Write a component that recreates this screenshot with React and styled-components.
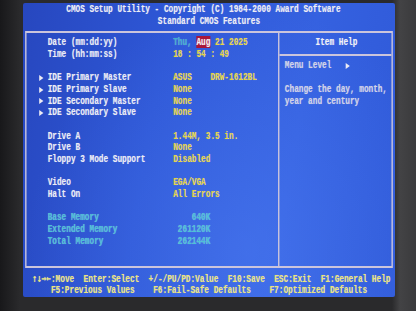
import React from 'react'
import styled, { createGlobalStyle } from 'styled-components'

// text-mode screen: 80 x 25 cells, each cell 4.65px x 11.7px on the photo
const ROW = 11.7

const GlobalStyle = createGlobalStyle`
  html, body {
    margin: 0;
    padding: 0;
    width: 416px;
    height: 311px;
    overflow: hidden;
    background: #232325;
  }
`

const Bezel = styled.div`
  width: 416px;
  height: 311px;
  overflow: hidden;
  box-sizing: border-box;
  padding: 3px 0 0 23px;
  background:
    linear-gradient(90deg, #18181a 0px, #2a2a2c 20px, #2a2a2c 392px, #434345 400px, #3a3a3c 416px);
`

const Tube = styled.div`
  width: 372px;
  height: 294px;
  border-radius: 2px;
  overflow: hidden;
  background:
    radial-gradient(ellipse at 60% 85%, rgba(90, 140, 255, 0.35), rgba(0, 0, 0, 0) 70%),
    linear-gradient(100deg, #2747bf 0%, #2e57d6 35%, #3561e0 70%, #2f59d8 100%);
`

const Screen = styled.div`
  width: 80ch;
  transform: scaleX(0.7045);
  transform-origin: 0 0;
  font-family: "Liberation Mono", "DejaVu Sans Mono", monospace;
  font-weight: bold;
  font-size: 11px;
  line-height: ${ROW}px;
  color: #ececf4;
  white-space: pre;
  text-shadow: 0 0 1px rgba(255, 255, 255, 0.4);
`

const Line = styled.div`
  height: ${ROW}px;
  padding-left: ${(p) => p.$col || 0}ch;
  color: ${(p) => p.$color || 'inherit'};
`

const Header = styled.div`
  height: ${ROW * 2}px;
  padding-top: 1px;
  box-sizing: border-box;
`

const Box = styled.div`
  margin: ${ROW * 0.5 - 1}px 0 0 0.5ch;
  width: 79ch;
  height: ${ROW * 20 + 3}px;
  box-sizing: border-box;
  border: 2px solid #cbc5dc;
  display: flex;
`

const Main = styled.div`
  width: 54ch;
  box-sizing: border-box;
  padding: ${ROW * 0.5 - 2}px 0 0 2.5ch;
  display: flex;
  flex-direction: column;
  gap: ${ROW}px;
`

const Section = styled.div`
  display: flex;
  flex-direction: column;
`

const Item = styled.div`
  height: ${ROW}px;
  display: grid;
  grid-template-columns: 2ch 27ch ${(p) => (p.$valueWidth ? `${p.$valueWidth}ch` : 'auto')} auto;
  align-items: center;
  color: ${(p) => p.$color || '#ececf4'};
`

const Pointer = styled.span`
  width: 0;
  height: 0;
  border-left: 6px solid #ecebf4;
  border-top: 3.5px solid transparent;
  border-bottom: 3.5px solid transparent;
  margin-left: 1px;
`

const Value = styled.span`
  color: ${(p) => p.$color || '#e6d444'};
  text-align: ${(p) => (p.$right ? 'right' : 'left')};
`

const Thin = styled.span`
  color: ${(p) => p.$color};
  background: ${(p) => p.$bg || 'transparent'};
`

const Arrows = styled.span`
  font-family: "DejaVu Sans Mono", monospace;
  letter-spacing: 0;
`

const Help = styled.div`
  flex: 1;
  border-left: 2px solid #cbc5dc;
  padding-top: ${ROW * 0.5 - 2}px;
  color: #d2d2e6;
`

const HelpTitle = styled.div`
  height: ${ROW}px;
  text-align: center;
  color: #f0f0f6;
  padding-left: 0.5ch;
`

const HelpRule = styled.div`
  height: ${ROW}px;
  display: flex;
  align-items: center;
  &::after {
    content: '';
    flex: 1;
    border-top: 2px solid #cbc5dc;
  }
`

const HelpText = styled.div`
  padding-left: 1.2ch;
  display: flex;
  flex-direction: column;
  gap: ${(p) => (p.$gap ? ROW : 0)}px;
`

const LevelRow = styled.div`
  height: ${ROW}px;
  display: flex;
  align-items: center;
  gap: 3ch;
`

const Footer = styled.div`
  padding-top: ${ROW * 0.5 - 1}px;
  color: #ece47a;
`

const items = {
  ide: [
    ['IDE Primary Master', 'ASUS', 'DRW-1612BL'],
    ['IDE Primary Slave', 'None'],
    ['IDE Secondary Master', 'None'],
    ['IDE Secondary Slave', 'None'],
  ],
  drives: [
    ['Drive A', '1.44M, 3.5 in.'],
    ['Drive B', 'None'],
    ['Floppy 3 Mode Support', 'Disabled'],
  ],
  video: [
    ['Video', 'EGA/VGA'],
    ['Halt On', 'All Errors'],
  ],
  memory: [
    ['Base Memory', '640K'],
    ['Extended Memory', '261120K'],
    ['Total Memory', '262144K'],
  ],
}

const CYAN = '#4cc2d6'

export default function App() {
  return (
    <>
      <GlobalStyle />
      <Bezel>
        <Tube>
          <Screen>
            <Header>
              <Line $col={9.3}>CMOS Setup Utility - Copyright (C) 1984-2000 Award Software</Line>
              <Line $col={29}>Standard CMOS Features</Line>
            </Header>

            <Box>
              <Main>
                <Section>
                  <Item>
                    <span />
                    <span>Date (mm:dd:yy)</span>
                    <Value>
                      <Thin $color="#3fb0cc">Thu, </Thin>
                      <Thin $color="#f4eef4" $bg="#a8163a">Aug</Thin> 21 2025
                    </Value>
                  </Item>
                  <Item>
                    <span />
                    <span>Time (hh:mm:ss)</span>
                    <Value>18 : 54 : 49</Value>
                  </Item>
                </Section>

                <Section>
                  {items.ide.map(([label, value, model]) => (
                    <Item key={label} $valueWidth={8}>
                      <Pointer />
                      <span>{label}</span>
                      <Value>{value}</Value>
                      {model && <Value>{model}</Value>}
                    </Item>
                  ))}
                </Section>

                {[items.drives, items.video].map((group, i) => (
                  <Section key={i}>
                    {group.map(([label, value]) => (
                      <Item key={label}>
                        <span />
                        <span>{label}</span>
                        <Value>{value}</Value>
                      </Item>
                    ))}
                  </Section>
                ))}

                <Section>
                  {items.memory.map(([label, value]) => (
                    <Item key={label} $color={CYAN} $valueWidth={8}>
                      <span />
                      <span>{label}</span>
                      <Value $color={CYAN} $right>{value}</Value>
                    </Item>
                  ))}
                </Section>
              </Main>

              <Help>
                <HelpTitle>Item Help</HelpTitle>
                <HelpRule />
                <HelpText $gap>
                  <LevelRow>
                    <span>Menu Level</span>
                    <Pointer />
                  </LevelRow>
                  <div>
                    <Line>Change the day, month,</Line>
                    <Line>year and century</Line>
                  </div>
                </HelpText>
              </Help>
            </Box>

            <Footer>
              <Line $col={2}><Arrows>↑↓→←</Arrows>:Move  Enter:Select  +/-/PU/PD:Value  F10:Save  ESC:Exit  F1:General Help</Line>
              <Line $col={6}>F5:Previous Values    F6:Fail-Safe Defaults    F7:Optimized Defaults</Line>
            </Footer>
          </Screen>
        </Tube>
      </Bezel>
    </>
  )
}
